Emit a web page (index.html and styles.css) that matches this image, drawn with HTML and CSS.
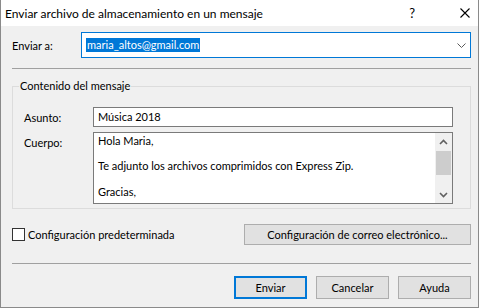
FILE: index.html
```html
<!DOCTYPE html>
<html lang="es">
<head>
<meta charset="utf-8">
<title>Enviar archivo</title>
<link rel="stylesheet" href="styles.css">
</head>
<body>
<div class="window">
  <div class="titlebar">
    <span class="title">Enviar archivo de almacenamiento en un mensaje</span>
    <span class="help">?</span>
    <svg class="close" width="10" height="10" viewBox="0 0 10 10"><path d="M0.5 0.5L9.5 9.5M9.5 0.5L0.5 9.5" stroke="#000" stroke-width="1.1" fill="none"/></svg>
  </div>
  <div class="content">
    <div class="row-to">
      <span class="lbl-to">Enviar a:</span>
      <div class="combo">
        <span class="sel">maria_altos@gmail.com</span>
        <svg class="chev" width="9" height="5" viewBox="0 0 9 5"><path d="M0.5 0.5L4.5 4.5L8.5 0.5" stroke="#5a5a5a" stroke-width="1" fill="none"/></svg>
      </div>
    </div>
    <div class="sep sep-top"></div>
    <div class="group">
      <span class="legend">Contenido del mensaje</span>
      <div class="row-field">
        <span class="lbl">Asunto:</span>
        <div class="input">Música 2018</div>
      </div>
      <div class="row-body">
        <span class="lbl lbl-body">Cuerpo:</span>
        <div class="textarea">
          <div class="text">
            <p class="l1">Hola Maria,</p>
            <p class="l2">Te adjunto los archivos comprimidos con Express Zip.</p>
            <p class="l3">Gracias,</p>
          </div>
          <div class="scroll">
            <div class="arrow">
              <svg width="9" height="6" viewBox="0 0 9 6"><path d="M1 5L4.5 1.5L8 5" stroke="#606060" stroke-width="1.6" fill="none"/></svg>
            </div>
            <div class="track"><div class="thumb"></div></div>
            <div class="arrow">
              <svg width="9" height="6" viewBox="0 0 9 6"><path d="M1 1L4.5 4.5L8 1" stroke="#606060" stroke-width="1.6" fill="none"/></svg>
            </div>
          </div>
        </div>
      </div>
    </div>
    <div class="row-opts">
      <label class="check"><span class="box"></span><span>Configuración predeterminada</span></label>
      <div class="btn btn-config">Configuración de correo electrónico...</div>
    </div>
    <div class="sep sep-bottom"></div>
    <div class="row-actions">
      <div class="btn btn-action btn-default">Enviar</div>
      <div class="btn btn-action">Cancelar</div>
      <div class="btn btn-action">Ayuda</div>
    </div>
  </div>
</div>
</body>
</html>
```
FILE: styles.css
```css
* { box-sizing: border-box; }
html, body { margin: 0; padding: 0; }
body {
  width: 479px;
  height: 308px;
  font-family: Lato, "Liberation Sans", Arial, sans-serif;
  font-size: 11px;
  color: #000;
  background: #f0f0f0;
  overflow: hidden;
}
.window {
  width: 479px;
  height: 308px;
  border: 1px solid #8a8a8a;
  border-top: none;
  background: #f0f0f0;
}
.titlebar {
  height: 26px;
  background: #fff;
  display: flex;
  align-items: center;
  padding-left: 4px;
}
.title { flex: 1; font-size: 12px; }
.help { font-size: 13px; margin-right: 45px; color: #000; }
.close { margin-right: 8px; }
.content {
  padding: 6px 7px 0 11px;
}
.row-to {
  display: flex;
  align-items: center;
  height: 26px;
}
.lbl-to { width: 69px; }
.combo {
  width: 390px;
  height: 26px;
  border: 1px solid #0078d7;
  background: #fff;
  display: flex;
  align-items: center;
  padding-left: 4px;
  padding-right: 4px;
}
.sel {
  background: #0078d7;
  color: #fff;
  line-height: 14px;
  padding: 0 1px;
  flex: none;
}
.chev { margin-left: auto; }
.sep { height: 1px; background: #a0a0a0; }
.sep-top { margin-top: 10px; }
.group {
  margin-top: 17px;
  border: 1px solid #dcdcdc;
  padding: 0 16px 9px 11px;
  height: 123px;
}
.legend {
  display: inline-block;
  margin: -9px 0 0 -5px;
  padding: 0 1px;
  line-height: 16px;
  height: 16px;
  background: #f0f0f0;
  vertical-align: top;
}
.row-field {
  display: flex;
  align-items: center;
  margin-top: 7px;
}
.lbl { width: 69px; flex: none; }
.input {
  width: 360px;
  height: 20px;
  border: 1px solid #7a7a7a;
  background: #fff;
  padding-left: 4px;
  line-height: 18px;
}
.row-body {
  display: flex;
  align-items: flex-start;
  margin-top: 5px;
}
.lbl-body { margin-top: 3px; line-height: 16px; }
.textarea {
  width: 360px;
  height: 72px;
  border: 1px solid #7a7a7a;
  background: #fff;
  display: flex;
}
.text {
  flex: 1;
  padding: 0 0 0 4px;
}
.text p { margin: 0; line-height: 16px; }
.l2 { margin-top: 9px !important; }
.l3 { margin-top: 10px !important; }
.scroll {
  width: 17px;
  flex: none;
  background: #f0f0f0;
  display: flex;
  flex-direction: column;
}
.arrow {
  height: 17px;
  display: flex;
  align-items: center;
  justify-content: center;
}
.track {
  flex: 1;
  padding: 1px 1px 0 1px;
}
.thumb {
  height: 24px;
  background: #cdcdcd;
}
.row-opts {
  display: flex;
  align-items: center;
  justify-content: space-between;
  margin-top: 15px;
  height: 21px;
}
.check { display: flex; align-items: center; }
.box {
  width: 13px;
  height: 13px;
  border: 1px solid #333;
  background: #fff;
  margin-right: 3px;
}
.btn {
  background: #e1e1e1;
  border: 1px solid #adadad;
  display: flex;
  align-items: center;
  justify-content: center;
}
.btn-config { width: 227px; height: 21px; }
.sep-bottom { margin-top: 18px; }
.row-actions {
  display: flex;
  justify-content: flex-end;
  gap: 9px;
  margin-top: 12px;
}
.btn-action { width: 73px; height: 23px; }
.btn-default { border: 2px solid #0078d7; }
```
